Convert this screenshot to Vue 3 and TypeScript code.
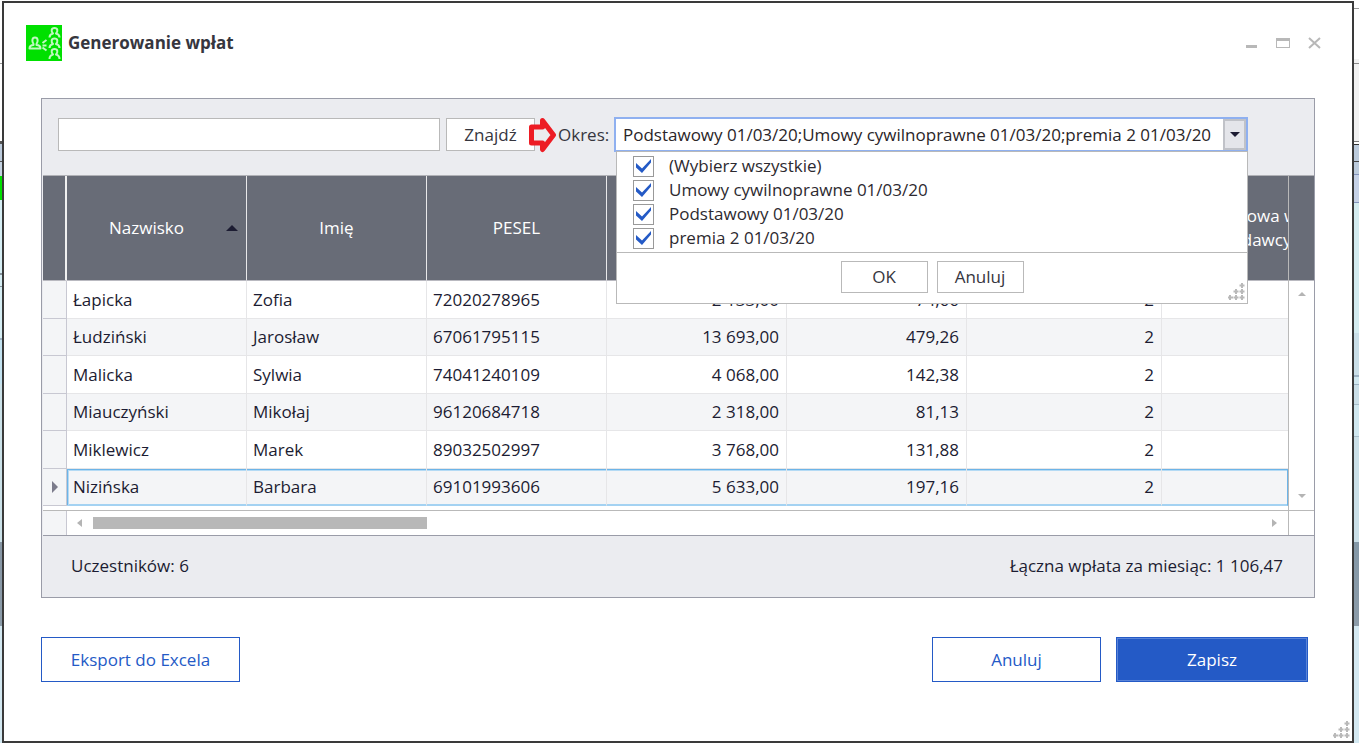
<script setup lang="ts">
import { ref } from 'vue'

interface Row {
  surname: string
  name: string
  pesel: string
  base: string
  amount: string
  rate: string
}

interface Period {
  label: string
  checked: boolean
}

const rows: Row[] = [
  { surname: 'Łapicka', name: 'Zofia', pesel: '72020278965', base: '2 133,00', amount: '74,66', rate: '2' },
  { surname: 'Łudziński', name: 'Jarosław', pesel: '67061795115', base: '13 693,00', amount: '479,26', rate: '2' },
  { surname: 'Malicka', name: 'Sylwia', pesel: '74041240109', base: '4 068,00', amount: '142,38', rate: '2' },
  { surname: 'Miauczyński', name: 'Mikołaj', pesel: '96120684718', base: '2 318,00', amount: '81,13', rate: '2' },
  { surname: 'Miklewicz', name: 'Marek', pesel: '89032502997', base: '3 768,00', amount: '131,88', rate: '2' },
  { surname: 'Nizińska', name: 'Barbara', pesel: '69101993606', base: '5 633,00', amount: '197,16', rate: '2' },
]

const selected = ref(5)
const query = ref('')
const open = ref(true)
const periodText = ref('Podstawowy 01/03/20;Umowy cywilnoprawne 01/03/20;premia 2 01/03/20')
const periods = ref<Period[]>([
  { label: '(Wybierz wszystkie)', checked: true },
  { label: 'Umowy cywilnoprawne 01/03/20', checked: true },
  { label: 'Podstawowy 01/03/20', checked: true },
  { label: 'premia 2 01/03/20', checked: true },
])
</script>

<template>
  <div class="desktop">
    <div class="edge edge-left"></div>
    <main class="dialog">
      <header class="titlebar">
        <svg class="logo" viewBox="0 0 36 36" aria-hidden="true">
          <rect width="36" height="36" fill="#00e000" />
          <g fill="none" stroke="#c0f8c0" stroke-width="2" stroke-linejoin="round">
            <path d="M7.500 19C6 17 5.500 12.500 9 12.500S12 17 10.500 19v1c2 0 4 .5 4 3.500h-11c0-3 2-3.500 4-3.500z" />
            <path d="M16.500 18l4-3M16.500 20.500h4M16.500 22.500l4 3" />
            <path d="M23.500 12.500c0-3 1.500-3.500 3.500-4-2-2-2-5.500 1.500-5.500s3.500 3.500 1.500 5.500c2 .5 3.500 1 3.500 4" />
            <path d="M23.500 23c0-3 1.500-3.500 3.500-4-2-2-2-5.500 1.500-5.500s3.500 3.500 1.500 5.500c2 .5 3.500 1 3.500 4" />
            <path d="M23.500 34c0-3 1.500-4 3.500-4.500-2-2-2-5.500 1.500-5.500s3.500 3.500 1.500 5.500c2 .5 3.500 1.500 3.500 4.500" />
          </g>
        </svg>
        <h1>Generowanie wpłat</h1>
        <div class="window-controls">
          <button type="button" aria-label="Minimalizuj">
            <svg viewBox="0 0 16 12"><path d="M3 8h11v3H3z" fill="#b8b8b8" /></svg>
          </button>
          <button type="button" aria-label="Maksymalizuj">
            <svg viewBox="0 0 16 12"><path d="M1 1h14v10H1zM2 4v6h12V4z" fill="#b8b8b8" fill-rule="evenodd" /></svg>
          </button>
          <button type="button" aria-label="Zamknij">
            <svg viewBox="0 0 16 12"><path d="M2 1l11 10M13 1L2 11" stroke="#b8b8b8" stroke-width="2" /></svg>
          </button>
        </div>
      </header>

      <section class="panel">
        <div class="toolbar">
          <input v-model="query" class="search" type="text" aria-label="Szukaj" />
          <div class="find-wrap">
            <button type="button" class="grey-button find">Znajdź</button>
            <svg class="pointer" viewBox="0 0 28 36" aria-hidden="true">
              <path d="M2.500 10h11V3.500L24.500 18 13.500 32.500V26h-11z" fill="#ebecef" stroke="#ed1c24" stroke-width="5" stroke-linejoin="round" />
            </svg>
          </div>
          <label class="period-label" for="period">Okres:</label>
          <div class="combo">
            <div class="combo-field">
              <input id="period" v-model="periodText" type="text" />
              <button type="button" aria-label="Rozwiń" @click="open = !open">
                <svg viewBox="0 0 10 5"><path d="M0 0h10L5 5z" fill="#1c1c32" /></svg>
              </button>
            </div>
            <div v-if="open" class="popup">
              <div class="options">
                <label v-for="p in periods" :key="p.label" class="option">
                  <input v-model="p.checked" type="checkbox" />
                  <svg v-if="p.checked" viewBox="0 0 21 21" aria-hidden="true">
                    <path d="M3 8v4.500l6 5.500 9-10.500V4l-9 9.500z" fill="#245ac6" />
                  </svg>
                  <span>{{ p.label }}</span>
                </label>
              </div>
              <div class="popup-actions">
                <button type="button" class="grey-button" @click="open = false">OK</button>
                <button type="button" class="grey-button" @click="open = false">Anuluj</button>
              </div>
              <svg class="grip" viewBox="0 0 17 17" aria-hidden="true">
                <path d="M14 0v5M11.500 2.500h5M8 6v5M5.500 8.500h5M14 6v5M11.500 8.500h5M2 12v5M0 14.500h5M8 12v5M5.500 14.500h5M14 12v5M11.500 14.500h5" stroke="#b9b9b9" stroke-width="2" />
              </svg>
            </div>
          </div>
        </div>

        <div class="grid">
          <div class="viewport">
            <table>
              <colgroup>
                <col class="c-mark" />
                <col class="c-std" />
                <col class="c-std" />
                <col class="c-std" />
                <col class="c-std" />
                <col class="c-std" />
                <col class="c-wide" />
                <col />
              </colgroup>
              <thead>
                <tr>
                  <th class="mark"></th>
                  <th class="sorted">
                    <div>
                      <span>Nazwisko</span>
                      <svg viewBox="0 0 12 6"><path d="M0 6h12L6 0z" fill="#1c1c32" /></svg>
                    </div>
                  </th>
                  <th>Imię</th>
                  <th>PESEL</th>
                  <th></th>
                  <th></th>
                  <th></th>
                  <th class="cut">
                    <div class="cut-first">Podstawowa wpłata</div>
                    <div class="cut-second">pracodawcy</div>
                  </th>
                </tr>
              </thead>
              <tbody>
                <tr v-for="(r, i) in rows" :key="r.pesel" :class="{ selected: i === selected }" @click="selected = i">
                  <td class="mark">
                    <svg v-if="i === selected" viewBox="0 0 6 12"><path d="M0 0l6 6-6 6z" fill="#7c7c8c" /></svg>
                  </td>
                  <td>{{ r.surname }}</td>
                  <td>{{ r.name }}</td>
                  <td>{{ r.pesel }}</td>
                  <td class="num">{{ r.base }}</td>
                  <td class="num">{{ r.amount }}</td>
                  <td class="num">{{ r.rate }}</td>
                  <td></td>
                </tr>
              </tbody>
            </table>
          </div>
          <div class="vscroll">
            <div class="vscroll-head"></div>
            <div class="vscroll-track">
              <svg viewBox="0 0 8 4"><path d="M0 4h8L4 0z" fill="#b4b4b4" /></svg>
              <svg viewBox="0 0 8 4"><path d="M0 0h8L4 4z" fill="#b4b4b4" /></svg>
            </div>
          </div>
        </div>
        <div class="hscroll">
          <div class="hscroll-mark"></div>
          <div class="hscroll-track">
            <svg viewBox="0 0 5 8"><path d="M5 0v8L0 4z" fill="#b4b4b4" /></svg>
            <div class="rail"><div class="thumb"></div></div>
            <svg viewBox="0 0 5 8"><path d="M0 0v8l5-4z" fill="#b4b4b4" /></svg>
          </div>
          <div class="hscroll-corner"></div>
        </div>

        <div class="summary">
          <span>Uczestników: 6</span>
          <span>Łączna wpłata za miesiąc: 1 106,47</span>
        </div>
      </section>

      <footer class="actions">
        <button type="button" class="outline export">Eksport do Excela</button>
        <button type="button" class="outline cancel">Anuluj</button>
        <button type="button" class="primary">Zapisz</button>
      </footer>
      <svg class="grip" viewBox="0 0 17 17" aria-hidden="true">
        <path d="M14 0v5M11.500 2.500h5M8 6v5M5.500 8.500h5M14 6v5M11.500 8.500h5M2 12v5M0 14.500h5M8 12v5M5.500 14.500h5M14 12v5M11.500 14.500h5" stroke="#b9b9b9" stroke-width="2" />
      </svg>
    </main>
    <div class="edge edge-right"></div>
  </div>
</template>

<style>
body {
  margin: 0;
}
</style>

<style scoped>
* {
  box-sizing: border-box;
}
.desktop {
  display: flex;
  min-height: 100vh;
  background: #fff;
  color: #1c1c32;
  font: 17px/24px "Open Sans", "Noto Sans", sans-serif;
}
button,
input {
  font: inherit;
  color: inherit;
  border-radius: 0;
}
svg {
  display: block;
}
.edge {
  flex: none;
}
.edge-left {
  width: 2px;
  background: linear-gradient(
    #fff 63px, #999 63px 64px, #fff 64px 141px, #555 141px 144px, #bccbdc 144px 161px, #555 161px 162px,
    #c5d3e2 162px 176px, #00e000 176px 200px, #d6eef4 200px 273px, #87939d 273px 275px, #d6eef4 275px 286px,
    #87939d 286px 287px, #d6eef4 287px 338px, #9fb4c4 338px 340px, #c3e2f0 340px 384px, #cbe1e8 384px 542px,
    #8796a4 542px, #8c9ca9 626px, #d3e8f1 626px
  );
}
.edge-right {
  width: 5px;
  background: linear-gradient(
    #fff 8px, #999 8px 9px, #fff 9px 59px, #f1f1f1 59px 63px, #888 63px 64px, #f1f1f1 64px 141px,
    #777 141px 142px, #fff 142px 144px, #333 144px 145px, #bccbdc 145px 161px, #444 161px 162px,
    #bccbdc 162px 174px, #8493bb 174px 175px, #c5d1e6 175px 202px, #8493bb 202px 203px, #d4ecf0 203px 333px,
    #cadfe8 333px 375px, #9db3c4 375px 377px, #d0e8f0 377px 384px, #9db3c4 384px 385px, #cadfe8 385px 404px,
    #a8becb 404px 405px, #d0e8f0 405px 436px, #a8becb 436px 437px, #cbe0e8 437px 542px, #8498a7 542px,
    #8c9ca9 626px, #d3e8f1 626px
  );
}
.dialog {
  position: relative;
  flex: 1;
  min-width: 0;
  margin-top: 1px;
  border: 2px solid #3a3a3a;
  padding: 22px 37px 56px;
  background: #fff;
}
.titlebar {
  display: flex;
  align-items: center;
  gap: 6px;
  height: 36px;
  margin: 0 -8px 0 -15px;
}
.logo {
  width: 36px;
  height: 36px;
}
h1 {
  flex: 1;
  margin: 0;
  font-size: 17px;
  font-weight: 700;
  line-height: 24px;
  color: #36363e;
}
.window-controls {
  display: flex;
  gap: 16px;
}
.window-controls button {
  width: 16px;
  height: 12px;
  padding: 0;
  border: 0;
  background: none;
}
.window-controls svg {
  width: 16px;
  height: 12px;
}
.panel {
  margin-top: 37px;
  border: 1px solid #9a9ca8;
  padding: 0 0 0 1px;
  background: #ebecf0;
}
.toolbar {
  display: flex;
  align-items: center;
  padding: 18px 66px 23px 15px;
}
.search {
  flex: none;
  width: 382px;
  height: 33px;
  border: 1px solid #b9b9b9;
  padding: 0 8px;
  background: #fff;
}
.find-wrap {
  position: relative;
  margin-left: 6px;
}
.grey-button {
  width: 87px;
  height: 32px;
  padding: 0;
  border: 1px solid #b9b9b9;
  background: #fff;
  color: #36363e;
}
.grey-button.find {
  display: block;
  width: 89px;
  height: 33px;
}
.pointer {
  position: absolute;
  left: 83px;
  top: -1px;
  width: 28px;
  height: 36px;
}
.period-label {
  margin-left: 23px;
  width: 56px;
  color: #36363e;
}
.combo {
  position: relative;
  flex: 1;
  min-width: 0;
}
.combo-field {
  display: flex;
  height: 35px;
  border: 2px solid #8fb0f0;
  background: #fff;
}
.combo-field input {
  flex: 1;
  min-width: 0;
  padding: 0 7px;
  border: 0;
  outline: 0;
  background: #fff;
  color: #2a2528;
}
.combo-field button {
  display: grid;
  place-items: center;
  width: 23px;
  padding: 0;
  border: 2px solid #c0c2c8;
  background: #e4e5ea;
}
.combo-field svg {
  width: 10px;
  height: 5px;
}
.popup {
  position: absolute;
  z-index: 2;
  left: 2px;
  right: 0;
  top: 34px;
  border: 1px solid #b9b9b9;
  background: #fff;
}
.options {
  padding: 2px 16px;
  border-bottom: 1px solid #b9b9b9;
}
.option {
  position: relative;
  display: flex;
  align-items: center;
  gap: 15px;
  height: 24px;
  color: #2d2a30;
}
.option input {
  appearance: none;
  width: 21px;
  height: 21px;
  margin: 0;
  border: 1px solid #999;
  background: #fff;
}
.option svg {
  position: absolute;
  left: 0;
  top: 1px;
  width: 21px;
  height: 21px;
  pointer-events: none;
}
.popup-actions {
  display: flex;
  justify-content: center;
  gap: 9px;
  padding: 8px 0 10px;
}
.grip {
  position: absolute;
  right: 2px;
  bottom: 3px;
  width: 17px;
  height: 17px;
}
.grid {
  display: flex;
  border-top: 1px solid #b0b1b6;
  background: #fff;
}
.viewport {
  flex: 1;
  min-width: 0;
  overflow: hidden;
  padding-bottom: 4px;
}
table {
  width: 100%;
  table-layout: fixed;
  border-collapse: separate;
  border-spacing: 0;
}
.c-mark {
  width: 24px;
}
.c-std {
  width: 180px;
}
.c-wide {
  width: 195px;
}
th {
  height: 105px;
  padding: 0;
  border-right: 1px solid #e8e8ea;
  border-bottom: 1px solid #b9b9c0;
  background: #686c77;
  color: #fff;
  font-weight: 400;
  text-align: center;
}
th.mark {
  border-right: 2px solid #f0f0f0;
}
th:last-child {
  border-right: 0;
}
.sorted div {
  display: flex;
  align-items: center;
  padding-right: 8px;
}
.sorted span {
  flex: 1;
}
.sorted svg {
  width: 12px;
  height: 6px;
}
.cut {
  overflow: hidden;
}
.cut div {
  white-space: nowrap;
}
.cut-first {
  width: 192px;
}
.cut-second {
  width: 164px;
}
td {
  height: 38px;
  padding: 0 6px;
  border-right: 1px solid #e6e6e8;
  border-bottom: 1px solid #e6e6e8;
  line-height: 24px;
  white-space: nowrap;
}
tr:nth-child(even) td {
  height: 37px;
  background: #f4f5f7;
}
td:last-child {
  border-right: 0;
}
.num {
  padding-right: 7px;
  text-align: right;
}
td.mark {
  padding: 0 0 0 9px;
  border-color: #c8c8d2;
  background: #f4f5f7;
}
.mark svg {
  width: 6px;
  height: 12px;
}
.selected td:not(.mark) {
  border-bottom-color: #a4d2f2;
  box-shadow: inset 0 1px #6cb4e8, inset 0 2px #b4daf4, inset 0 -1px #a4d2f2;
}
.selected td.mark + td {
  box-shadow: inset 1px 1px #6cb4e8, inset 2px 2px #b4daf4, inset 0 -1px #a4d2f2;
}
.selected td:last-child {
  border-right: 1px solid #6cb4e8;
}
.vscroll {
  display: flex;
  flex-direction: column;
  width: 26px;
  border-left: 1px solid #b9b9b9;
}
.vscroll-head {
  height: 105px;
  border-bottom: 1px solid #b9b9c0;
  background: #686c77;
}
.vscroll-track {
  flex: 1;
  display: flex;
  flex-direction: column;
  justify-content: space-between;
  align-items: center;
  padding: 11px 0 12px;
}
.vscroll-track svg {
  width: 8px;
  height: 4px;
}
.hscroll {
  display: flex;
  height: 26px;
  border-top: 1px solid #b9b9b9;
  border-bottom: 1px solid #9a9ca8;
  background: #fff;
}
.hscroll-mark {
  width: 24px;
  border-right: 1px solid #c8c8d2;
  background: #f4f5f7;
}
.hscroll-track {
  flex: 1;
  display: flex;
  align-items: center;
  gap: 11px;
  padding: 0 11px 0 10px;
}
.hscroll-track svg {
  width: 5px;
  height: 8px;
}
.rail {
  flex: 1;
}
.thumb {
  width: calc(100% / 7 * 2);
  height: 12px;
  background: #b8b8b8;
}
.hscroll-corner {
  width: 26px;
  border-left: 1px solid #b9b9b9;
}
.summary {
  display: flex;
  justify-content: space-between;
  padding: 18px 31px 19px 28px;
}
.actions {
  display: flex;
  gap: 15px;
  margin-top: 39px;
  padding-right: 7px;
}
.actions button {
  height: 45px;
  padding: 0;
  border: 1px solid #245ac6;
}
.outline {
  background: #fff;
  color: #245ac6;
}
.export {
  width: 199px;
  margin-right: auto;
}
.cancel {
  width: 169px;
}
.actions .primary {
  width: 192px;
  background: #245ac6;
  color: #fff;
  box-shadow: inset 0 0 0 1px #5a84d8;
}
</style>
